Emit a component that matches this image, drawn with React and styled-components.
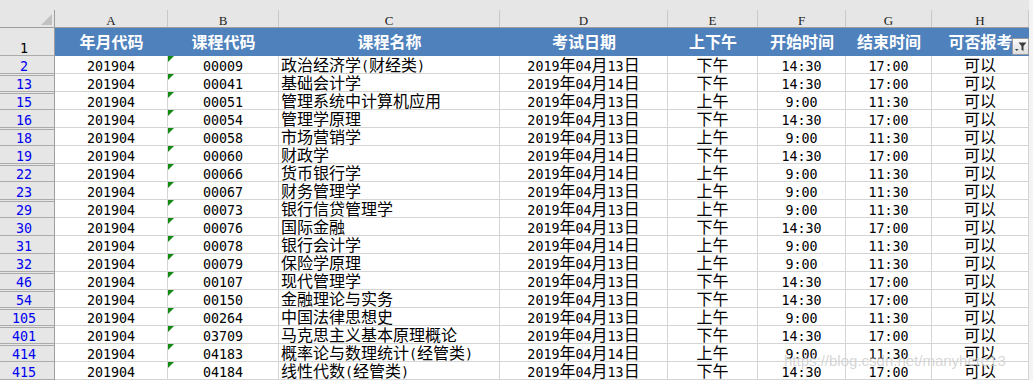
import React from "react";
import styled, { createGlobalStyle } from "styled-components";

const COLS = "55px 113px 111px 221px 168px 90px 88px 86px 97px";

const Global = createGlobalStyle`
  html, body { margin: 0; padding: 0; background: #f4f4f4; }
  body { font-family: "Noto Sans CJK SC", sans-serif; }
  * { box-sizing: border-box; }
`;

const Sheet = styled.div`
  position: relative;
  width: 1033px;
  height: 380px;
  overflow: hidden;
  background: #f4f4f4;
`;

const Grid = styled.div`
  display: grid;
  grid-template-columns: ${COLS};
  width: 1029px;
`;

const ColHeaderRow = styled(Grid)`
  padding-top: 10px;
  background: #e6e6e6;
  border-bottom: 1px solid #9e9e9e;
`;

const Corner = styled.div`
  height: 17px;
  border-right: 1px solid #9e9e9e;
  display: flex;
  justify-content: flex-end;
  align-items: flex-end;
  padding: 0 2px 2px 0;
`;

const CornerMark = styled.span`
  width: 0;
  height: 0;
  border-left: 11px solid transparent;
  border-bottom: 11px solid #c2c2c2;
`;

const ColLetter = styled.div`
  height: 17px;
  border-right: 1px solid #c9c9c9;
  text-align: center;
  font-family: "Liberation Serif", serif;
  font-size: 13px;
  line-height: 14px;
  padding-top: 4px;
  color: #222;
`;

const RowHead = styled.div`
  height: ${(p) => (p.$tall ? "28px" : "18px")};
  padding-top: ${(p) => (p.$tall ? "10px" : "0")};
  background: #e6e6e6;
  border-right: 1px solid #9e9e9e;
  border-bottom: 1px solid #ababab;
  box-shadow: ${(p) =>
    p.$gap ? "inset 0 1px 0 #e6e6e6, inset 0 2px 0 #ababab" : "none"};
  text-align: center;
  padding-right: 6px;
  line-height: 17px;
  font-size: 16px;
  color: ${(p) => (p.$plain ? "#000" : "#0000f0")};
`;

const TitleCell = styled.div`
  position: relative;
  height: 28px;
  background: #4f81bd;
  color: #fff;
  font-weight: 700;
  font-size: 16px;
  line-height: 26px;
  text-align: center;
  white-space: nowrap;
`;

const Cell = styled.div`
  position: relative;
  height: 18px;
  background: #fff;
  border-right: 1px solid #d4d4d4;
  border-bottom: 1px solid #d4d4d4;
  font-size: 16px;
  line-height: 17px;
  color: #000;
  white-space: nowrap;
  text-align: ${(p) => p.$align || "center"};
  padding-left: ${(p) => (p.$align === "left" ? "2px" : "0")};

  ${(p) =>
    p.$flag &&
    `&::before {
      content: "";
      position: absolute;
      left: 0;
      top: 0;
      border-top: 6px solid #138a13;
      border-right: 6px solid transparent;
    }`}
`;

const Latin = styled.span`
  font-family: "DejaVu Sans Mono", monospace;
  font-size: 13.33px;
  line-height: 1;
`;

const FilterButton = styled.span`
  position: absolute;
  right: 0;
  bottom: 1px;
  width: 17px;
  height: 17px;
  border: 1px solid #9a9a9a;
  background: linear-gradient(#fbfbfb, #dedede);
  display: flex;
  align-items: center;
  justify-content: center;
`;

const Watermark = styled.div`
  position: absolute;
  left: 784px;
  top: 352px;
  font-family: "Liberation Sans", Arial, sans-serif;
  font-size: 15px;
  color: rgba(150, 150, 150, 0.4);
  text-shadow: 0 0 1px rgba(255, 255, 255, 0.8);
  pointer-events: none;
  white-space: nowrap;
`;

function Txt({ children }) {
  const parts = String(children).split(/([\x20-\x7e]+)/);
  return parts.map((p, i) =>
    !p ? null : /^[\x20-\x7e]+$/.test(p) ? (
      <Latin key={i}>{p}</Latin>
    ) : (
      <React.Fragment key={i}>{p}</React.Fragment>
    )
  );
}

const letters = ["A", "B", "C", "D", "E", "F", "G", "H"];
const titles = ["年月代码", "课程代码", "课程名称", "考试日期", "上下午", "开始时间", "结束时间", "可否报考"];

const AM = ["上午", "9:00", "11:30"];
const PM = ["下午", "14:30", "17:00"];

const rows = [
  [2, "00009", "政治经济学(财经类)", "13", PM],
  [13, "00041", "基础会计学", "14", PM],
  [15, "00051", "管理系统中计算机应用", "13", AM],
  [16, "00054", "管理学原理", "13", PM],
  [18, "00058", "市场营销学", "13", AM],
  [19, "00060", "财政学", "14", PM],
  [22, "00066", "货币银行学", "14", AM],
  [23, "00067", "财务管理学", "13", AM],
  [29, "00073", "银行信贷管理学", "13", AM],
  [30, "00076", "国际金融", "13", PM],
  [31, "00078", "银行会计学", "14", AM],
  [32, "00079", "保险学原理", "13", AM],
  [46, "00107", "现代管理学", "13", PM],
  [54, "00150", "金融理论与实务", "13", PM],
  [105, "00264", "中国法律思想史", "13", AM],
  [401, "03709", "马克思主义基本原理概论", "13", PM],
  [414, "04183", "概率论与数理统计(经管类)", "14", AM],
  [415, "04184", "线性代数(经管类)", "13", PM],
];

function FilterIcon() {
  return (
    <svg width="13" height="13" viewBox="0 0 13 13">
      <path d="M1 9h3.5L2.75 11z" fill="#3a3a3a" />
      <path d="M4.5 2.5h8l-3 3.5v5l-2-1.2V6z" fill="#3a3a3a" />
    </svg>
  );
}

export default function App() {
  return (
    <>
      <Global />
      <Sheet>
        <ColHeaderRow>
          <Corner>
            <CornerMark />
          </Corner>
          {letters.map((l) => (
            <ColLetter key={l}>{l}</ColLetter>
          ))}
        </ColHeaderRow>
        <Grid>
          <RowHead $tall $plain>
            <Txt>1</Txt>
          </RowHead>
          {titles.map((t, i) => (
            <TitleCell key={t}>
              {t}
              {i === titles.length - 1 && (
                <FilterButton>
                  <FilterIcon />
                </FilterButton>
              )}
            </TitleCell>
          ))}
          {rows.map(([n, code, name, day, slot], idx) => {
            const gap = idx > 0 && rows[idx - 1][0] + 1 !== n;
            return (
              <React.Fragment key={n}>
                <RowHead $gap={gap}>
                  <Txt>{n}</Txt>
                </RowHead>
                <Cell>
                  <Txt>201904</Txt>
                </Cell>
                <Cell $flag>
                  <Txt>{code}</Txt>
                </Cell>
                <Cell $align="left">
                  <Txt>{name}</Txt>
                </Cell>
                <Cell>
                  <Txt>{`2019年04月${day}日`}</Txt>
                </Cell>
                <Cell>{slot[0]}</Cell>
                <Cell>
                  <Txt>{slot[1]}</Txt>
                </Cell>
                <Cell>
                  <Txt>{slot[2]}</Txt>
                </Cell>
                <Cell>可以</Cell>
              </React.Fragment>
            );
          })}
        </Grid>
        <Watermark>https://blog.csdn.net/manyhere13</Watermark>
      </Sheet>
    </>
  );
}
